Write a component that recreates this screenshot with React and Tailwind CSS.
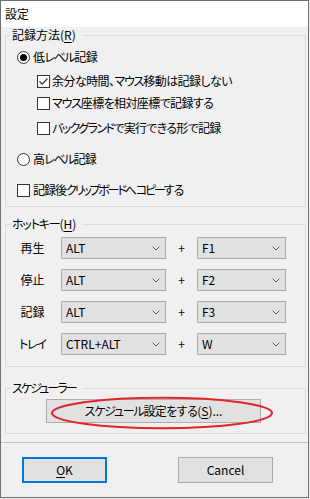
import React from "react";

// Split Japanese text into katakana / other runs so the narrow katakana of the
// original UI font can be approximated with tighter tracking.
function J({ children, k = "", o = "" }) {
  const text = String(children);
  const parts = text.split(/([\u30A0-\u30FF]+)/).filter((p) => p.length);
  return (
    <>
      {parts.map((p, i) =>
        /^[\u30A0-\u30FF]+$/.test(p) ? (
          <span key={i} className={k}>
            {p}
          </span>
        ) : (
          <span key={i} className={o}>
            {p}
          </span>
        )
      )}
    </>
  );
}

const U = ({ children }) => (
  <span className="underline decoration-1 underline-offset-[2px]">{children}</span>
);

function Radio({ checked }) {
  return (
    <span className="w-[13px] h-[13px] shrink-0 rounded-full border border-[#333333] bg-white flex items-center justify-center">
      {checked && <span className="w-[7px] h-[7px] rounded-full bg-black" />}
    </span>
  );
}

function Check({ checked }) {
  return (
    <span className="w-[13px] h-[13px] shrink-0 border border-[#333333] bg-white flex items-center justify-center">
      {checked && (
        <svg width="11" height="11" viewBox="0 0 11 11">
          <path d="M1.5 5.5 L4.2 8.2 L9.5 2.5" fill="none" stroke="#333333" strokeWidth="1.2" />
        </svg>
      )}
    </span>
  );
}

function Combo({ value, w }) {
  return (
    <div
      className={`${w} h-[22px] border border-[#adadad] bg-[#e1e1e1] flex items-center pl-[4px] pr-[5px] justify-between`}
    >
      <span>{value}</span>
      <svg width="8" height="5" viewBox="0 0 8 5">
        <path d="M0.5 0.5 L4 4 L7.5 0.5" fill="none" stroke="#606060" strokeWidth="1" />
      </svg>
    </div>
  );
}

function Legend({ children }) {
  return (
    <span className="absolute -top-[9px] left-[5px] px-[1px] pr-[6px] bg-[#f0f0f0] leading-[16px]">
      {children}
    </span>
  );
}

function HotRow({ label, mod, key2, first }) {
  return (
    <div className={`flex items-center h-[22px] pl-[8px] ${first ? "mt-[12px]" : "mt-[10px]"}`}>
      <span className="w-[37px] text-center">
        <J k="tracking-[-1.1px]">{label}</J>
      </span>
      <div className="ml-[10px]">
        <Combo value={mod} w="w-[105px]" />
      </div>
      <span className="w-[31px] text-center">+</span>
      <Combo value={key2} w="w-[89px]" />
    </div>
  );
}

export default function App() {
  return (
    <div className="w-[310px] h-[499px] bg-[#f0f0f0]">
      <div className="w-[309px] h-[498px] border border-[#6f6f6f] bg-[#f0f0f0] flex flex-col text-[12px] leading-[16px] text-black [font-family:'Noto_Sans_CJK_JP','Noto_Sans',sans-serif] [font-feature-settings:'palt'_1]">
        <div className="h-[26px] bg-white flex items-center pl-[4px]">設定</div>
        <div className="flex flex-col pl-[4px]">
          {/* group 1 */}
          <div className="relative mt-[8px] w-[301px] h-[172px] border border-[#dcdcdc] flex flex-col pl-[11px]">
            <Legend>
              記録方法(<U>R</U>)
            </Legend>
            <div className="mt-[13px] h-[16px] flex items-center">
              <Radio checked />
              <span className="ml-[3px]">
                <J k="tracking-[-1.4px]" o="tracking-[-0.6px]">低レベル記録</J>
              </span>
            </div>
            <div className="mt-[8px] h-[16px] flex items-center pl-[20px]">
              <Check checked />
              <span className="ml-[2px]">
                <J k="tracking-[-1.2px]" o="tracking-[-0.55px]">余分な時間、マウス移動は記録しない</J>
              </span>
            </div>
            <div className="mt-[6px] h-[16px] flex items-center pl-[20px]">
              <Check />
              <span className="ml-[2px]">
                <J k="tracking-[-1.2px]" o="tracking-[-0.6px]">マウス座標を相対座標で記録する</J>
              </span>
            </div>
            <div className="mt-[9px] h-[16px] flex items-center pl-[20px]">
              <Check />
              <span className="ml-[2px]">
                <J k="tracking-[-1.6px]" o="tracking-[-0.7px]">バックグランドで実行できる形で記録</J>
              </span>
            </div>
            <div className="mt-[15px] h-[16px] flex items-center">
              <Radio />
              <span className="ml-[3px]">
                <J k="tracking-[-1.6px]" o="tracking-[-0.7px]">高レベル記録</J>
              </span>
            </div>
            <div className="mt-[15px] h-[16px] flex items-center">
              <Check />
              <span className="ml-[3px]">
                <J k="tracking-[-2.2px]" o="tracking-[-1px]">記録後クリップボードへコピーする</J>
              </span>
            </div>
          </div>

          {/* group 2 */}
          <div className="relative mt-[17px] w-[301px] h-[143px] border border-[#dcdcdc] flex flex-col">
            <Legend>
              <J k="tracking-[-1.2px]">ホットキー</J>(<U>H</U>)
            </Legend>
            <HotRow label="再生" mod="ALT" key2="F1" first />
            <HotRow label="停止" mod="ALT" key2="F2" />
            <HotRow label="記録" mod="ALT" key2="F3" />
            <HotRow label="トレイ" mod="CTRL+ALT" key2="W" />
          </div>

          {/* group 3 */}
          <div className="relative mt-[21px] w-[301px] h-[46px] border border-[#dcdcdc] flex flex-col">
            <Legend>
              <J k="tracking-[-1.9px]">スケジューラー</J>
            </Legend>
            <div className="mt-[10px] ml-[40px] w-[215px] h-[24px] border border-[#adadad] bg-[#e1e1e1] flex items-center justify-center">
              <span>
                <J k="tracking-[-1.2px]" o="tracking-[-0.6px]">スケジュール設定をする</J>(<U>S</U>)...
              </span>
            </div>
            <svg
              className="absolute left-[44px] top-[6px]"
              width="224"
              height="36"
              viewBox="0 0 224 36"
            >
              <ellipse cx="112" cy="18" rx="110" ry="15.2" fill="none" stroke="#e4242b" strokeWidth="2" />
            </svg>
          </div>
        </div>

        <div className="mt-[8px] h-px bg-[#c4c4c4]" />

        <div className="mt-[14px] flex items-center">
          <div className="ml-[21px] w-[85px] h-[26px] border-2 border-[#0078d7] bg-[#e1e1e1] flex items-center justify-center">
            <span>
              <U>O</U>K
            </span>
          </div>
          <div className="ml-[71px] w-[95px] h-[26px] border border-[#adadad] bg-[#e1e1e1] flex items-center justify-center">
            Cancel
          </div>
        </div>
      </div>
    </div>
  );
}
